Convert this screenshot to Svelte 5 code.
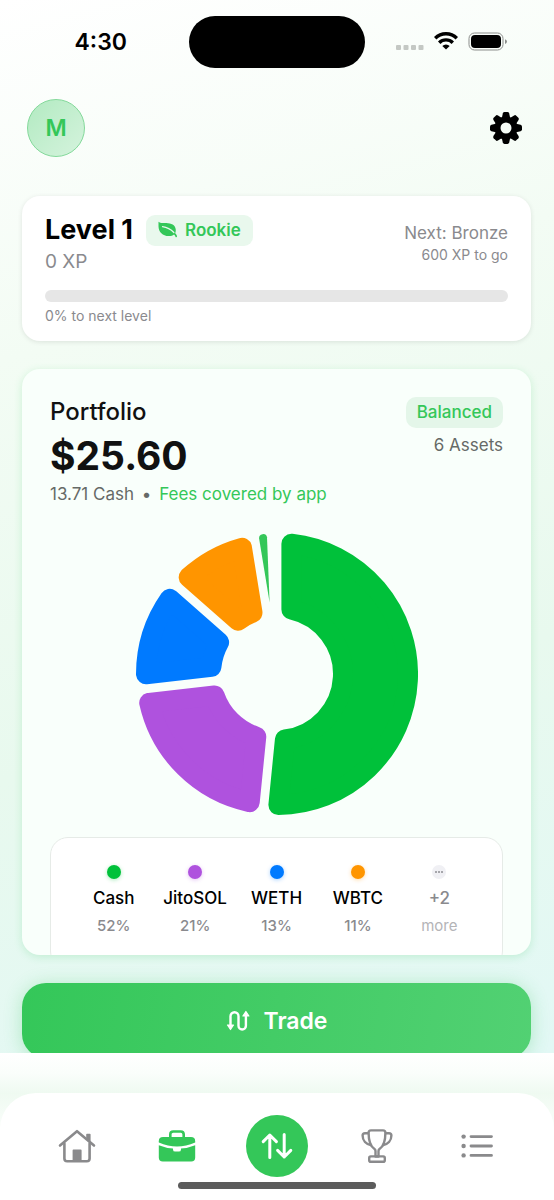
<script>
  // start and end are degrees, clockwise from twelve o'clock
  const slices = [
    { name: "Cash", share: "52%", color: "#00c13a", start: 0, end: 185.7 },
    { name: "JitoSOL", share: "21%", color: "#af52de", start: 185.7, end: 263.6 },
    { name: "WETH", share: "13%", color: "#007aff", start: 263.6, end: 311.3 },
    { name: "WBTC", share: "11%", color: "#ff9500", start: 311.3, end: 350.8 },
  ];

  const outer = 141;
  const inner = 56;
  const corner = 10;
  const inset = 4.4;

  let tab = "portfolio";

  function point(radius, angle) {
    return `${(radius * Math.sin(angle)).toFixed(2)} ${(-radius * Math.cos(angle)).toFixed(2)}`;
  }

  // the outline is pulled in by the corner radius, the round stroke fills it back
  function slicePath(s) {
    const from = (s.start * Math.PI) / 180;
    const to = (s.end * Math.PI) / 180;
    const ro = outer - corner;
    const ri = inner + corner;
    const ao = Math.asin((inset + corner) / ro);
    const ai = Math.asin((inset + corner) / ri);
    const largeOuter = to - from - 2 * ao > Math.PI ? 1 : 0;
    const largeInner = to - from - 2 * ai > Math.PI ? 1 : 0;
    return `M${point(ri, from + ai)}L${point(ro, from + ao)}A${ro} ${ro} 0 ${largeOuter} 1 ${point(ro, to - ao)}L${point(ri, to - ai)}A${ri} ${ri} 0 ${largeInner} 0 ${point(ri, from + ai)}Z`;
  }
</script>

<div class="app">
  <main class="content">
    <div class="status">
      <span class="time">4:30</span>
      <span class="island"></span>
      <svg class="signals" width="112" height="22" viewBox="0 0 112 22" aria-hidden="true">
        <g fill="#c4c8c4">
          <rect x="0" y="14" width="5" height="5" rx="1" />
          <rect x="7.5" y="14" width="5" height="5" rx="1" />
          <rect x="15" y="14" width="5" height="5" rx="1" />
          <rect x="22.5" y="14" width="5" height="5" rx="1" />
        </g>
        <g fill="none" stroke="#000" stroke-width="3.4">
          <path d="M39.2 7.2a15.2 15.2 0 0 1 21.6 0" />
          <path d="M43.2 11.7a9.6 9.6 0 0 1 13.6 0" />
        </g>
        <path d="M50 18.6l-3.7-3.7a5.3 5.3 0 0 1 7.4 0z" />
        <rect x="73" y="2" width="34" height="17" rx="5.5" fill="none" stroke="#8b8d8b" />
        <rect x="75" y="4" width="30" height="13" rx="4" />
        <path d="M109 8.2q2 .6 2 2.400t-2 2.400z" fill="#8b8d8b" />
      </svg>
    </div>

    <header class="top">
      <button class="avatar" aria-label="Profile">M</button>
      <button class="settings" aria-label="Settings">
        <svg width="34" height="34" viewBox="-17 -17 34 34">
          <g>
            {#each [0, 45, 90, 135, 180, 225, 270, 315] as a}
              <path d="M-4.4 -9L-3.2 -14.6Q-2.8 -16 -1.5 -16H1.5Q2.8 -16 3.2 -14.6L4.4 -9Z" transform="rotate({a})" />
            {/each}
          </g>
          <circle r="8.5" fill="none" stroke="#000" stroke-width="6" />
        </svg>
      </button>
    </header>

    <section class="card level">
      <div class="row">
        <div>
          <div class="title">
            <h2>Level 1</h2>
            <span class="rank">
              <svg width="20" height="18" viewBox="0 0 20 18" aria-hidden="true">
                <path d="M.5.8C2.5 2.6 6 1.9 10 2.2c5 .3 7.800 3 7.800 6.800 0 1.300-.2 2.400-.6 3.300 1 .8 1.700 2 1.800 3.200 0 .9-1.200 1.100-1.500.3-.3-.9-.8-1.600-1.500-2.200-1.400 1.200-3.300 1.600-5.400 1.500C4.8 14.900.5 11 .5 5.2z" fill="#34c759" />
                <path d="M4.5 5.6c4.300.6 8.200 2.500 11.400 5.900" fill="none" stroke="#e9f8ed" stroke-width="1.2" stroke-linecap="round" />
              </svg>
              Rookie
            </span>
          </div>
          <p class="xp">0 XP</p>
        </div>
        <div class="next">
          <p>Next: Bronze</p>
          <small>600 XP to go</small>
        </div>
      </div>
      <progress id="xp" max="600" value="0"></progress>
      <label for="xp">0% to next level</label>
    </section>

    <section class="card portfolio">
      <div class="row">
        <div>
          <h2>Portfolio</h2>
          <p class="total">$25.60</p>
        </div>
        <div class="side">
          <span class="mood">Balanced</span>
          <p>6 Assets</p>
        </div>
      </div>
      <p class="cash">13.71 Cash <span class="dot">•</span> <span class="fees">Fees covered by app</span></p>

      <svg class="pie" viewBox="-141 -141 282 282" role="img" aria-label="Portfolio allocation">
        {#each slices as s}
          <path d={slicePath(s)} fill={s.color} stroke={s.color} stroke-width={corner * 2} stroke-linejoin="round" />
        {/each}
        <path d="M-17.9 -135.5a4 4 0 0 1 7.900 -1.200L-7.4 -71.500Z" fill="#34c759" />
      </svg>

      <ul class="legend">
        {#each slices as s}
          <li>
            <i style="background: {s.color}; box-shadow: 0 1px 4px {s.color}55"></i>
            <b>{s.name}</b>
            <span>{s.share}</span>
          </li>
        {/each}
        <li class="more">
          <i>
            <svg width="10" height="4" viewBox="0 0 10 4" fill="#8e8e93" aria-hidden="true">
              <circle cx="2" cy="2" r="1" /><circle cx="5" cy="2" r="1" /><circle cx="8" cy="2" r="1" />
            </svg>
          </i>
          <b>+2</b>
          <span>more</span>
        </li>
      </ul>
    </section>

    <button class="trade">
      <svg width="24" height="22" viewBox="0 0 24 22" fill="none" stroke="#fff" stroke-width="2.4" aria-hidden="true">
        <path d="M4.5 15V6.200a4 4 0 0 1 8 0v9.600a3.700 3.700 0 0 0 7.400 0V6" />
        <path d="M1.5 15h6l-3 4.500zM16.900 6h6l-3 -4.500z" fill="#fff" stroke-width="1.2" stroke-linejoin="round" />
      </svg>
      Trade
    </button>
  </main>

  <div class="dock">
    <nav>
      <button aria-label="Home" class:active={tab === "home"} on:click={() => (tab = "home")}>
        <svg width="38" height="34" viewBox="0 0 38 34" fill="none" stroke="currentColor" stroke-width="2.6" stroke-linecap="round" stroke-linejoin="round">
          <path d="M2 16.500L19 2.200L36 16.500" />
          <path d="M6.400 14.500V29.500q0 2.800 2.800 2.800H28.800q2.800 0 2.800-2.800V14.500" />
          <path d="M29 9V5.500h2.800V12z" fill="currentColor" stroke-width="1.6" />
          <path d="M15.400 32V21.400H22.800V32z" fill="currentColor" stroke-width="1.6" />
        </svg>
      </button>
      <button aria-label="Portfolio" class:active={tab === "portfolio"} on:click={() => (tab = "portfolio")}>
        <svg width="38" height="32" viewBox="0 0 38 32" fill="currentColor">
          <path d="M12.300 8V4.500q0-3 3-3h7.400q3 0 3 3V8" fill="none" stroke="currentColor" stroke-width="2.6" />
          <path d="M.8 11.200Q.8 7 5 7H33q4.200 0 4.200 4.200V12.500Q28 16.400 19 16.400T.8 12.500z" />
          <path d="M.8 15.300Q8 18.200 15 18.600V19.400q0 2.200 2.200 2.200h3.600q2.200 0 2.200-2.200V18.600Q30 18.200 37.200 15.300V27.500Q37.200 31.500 33.200 31.500H4.800Q.8 31.500.8 27.500z" />
        </svg>
      </button>
      <button class="swap" aria-label="Swap">
        <svg width="32" height="28" viewBox="0 0 32 28" fill="none" stroke="#fff" stroke-width="3" stroke-linecap="round" stroke-linejoin="round">
          <path d="M8.800 25.500V3M2.200 9.600L8.800 3L15.400 9.600M23.200 2.500V25M16.600 18.400L23.200 25L29.800 18.400" />
        </svg>
      </button>
      <button aria-label="Rewards" class:active={tab === "rewards"} on:click={() => (tab = "rewards")}>
        <svg width="32" height="34" viewBox="0 0 32 34" fill="none" stroke="currentColor" stroke-width="2.4" stroke-linejoin="round">
          <path d="M7.600 3.800Q7.600 1.400 10 1.400H22Q24.400 1.400 24.400 3.800C24.400 12 22.500 17.500 18.500 20Q17.500 20.700 17.500 22V27.500H14.500V22Q14.500 20.700 13.500 20C9.500 17.500 7.600 12 7.600 3.800z" />
          <path d="M7.600 4.200H4Q1.600 4.200 1.600 6.600C1.600 11.500 5 15.300 10.300 16.200M24.400 4.200H28Q30.400 4.200 30.400 6.600C30.400 11.500 27 15.300 21.700 16.200" />
          <rect x="8.200" y="27.400" width="15.600" height="5.400" rx="1.6" />
        </svg>
      </button>
      <button aria-label="Activity" class:active={tab === "activity"} on:click={() => (tab = "activity")}>
        <svg width="32" height="24" viewBox="0 0 32 24" fill="currentColor" stroke="currentColor" stroke-linecap="round">
          <path d="M10 2.600H30.500M10 12H30.500M10 21.400H30.500" fill="none" stroke-width="2.8" />
          <g stroke="none">
            <circle cx="2.600" cy="2.600" r="2.2" /><circle cx="2.600" cy="12" r="2.2" /><circle cx="2.600" cy="21.400" r="2.2" />
          </g>
        </svg>
      </button>
      <span class="handle"></span>
    </nav>
  </div>
</div>

<style>
  :global(body) {
    margin: 0;
    background: #fff;
  }

  .app {
    display: flex;
    flex-direction: column;
    height: 100vh;
    font-family: Inter, "Liberation Sans", sans-serif;
    color: #000;
  }

  h2, p {
    margin: 0;
  }

  button {
    padding: 0;
    border: 0;
    background: none;
    font-family: inherit;
    cursor: pointer;
  }

  svg {
    display: block;
  }

  .content {
    flex: 1;
    min-height: 0;
    overflow-y: auto;
    scrollbar-width: none;
    padding: 16px 23px 0 22px;
    background: linear-gradient(165deg, #fff 0%, #f3fcf4 30%, #e8f9ee 65%, #e2f8f5 100%);
  }

  .status {
    display: grid;
    grid-template-columns: 1fr 176px 1fr;
    align-items: center;
    justify-items: center;
  }

  .time {
    padding-right: 9px;
    font-size: 23px;
    font-weight: 600;
  }

  .signals {
    margin-left: 9px;
  }

  .island {
    width: 176px;
    height: 52px;
    border-radius: 26px;
    background: #000;
  }

  .top {
    display: flex;
    align-items: center;
    justify-content: space-between;
    padding: 31px 8px 39px 5px;
  }

  .avatar {
    width: 58px;
    height: 58px;
    border: 1px solid #83d99a;
    border-radius: 50%;
    background: linear-gradient(135deg, #b2eac1, #d5f3dd);
    color: #34c759;
    font-size: 23px;
    font-weight: 600;
  }

  .card {
    border-radius: 18px;
  }

  .row {
    display: flex;
    justify-content: space-between;
  }

  .level {
    padding: 18px 23px 17px;
    background: #fff;
    box-shadow: 0 1px 5px rgba(0, 0, 0, 0.1);
  }

  .title {
    display: flex;
    align-items: center;
    gap: 13px;
  }

  .title h2 {
    font-size: 27px;
    font-weight: 700;
    line-height: 32px;
  }

  .rank {
    display: flex;
    align-items: center;
    gap: 7px;
    height: 31px;
    padding: 0 12px;
    border-radius: 9px;
    background: #e9f8ed;
    color: #34c759;
    font-size: 17px;
    font-weight: 600;
  }

  .xp {
    color: #8a8a8e;
    font-size: 19px;
    line-height: 31px;
  }

  .next {
    padding-top: 8px;
    color: #8a8a8e;
    font-size: 17px;
    line-height: 22px;
    text-align: right;
  }

  .next small {
    display: block;
    font-size: 14px;
  }

  progress {
    display: block;
    width: 100%;
    height: 12px;
    margin: 13px 0 5px;
    border: 0;
    border-radius: 6px;
    background: #e6e6e6;
    overflow: hidden;
    appearance: none;
  }

  progress::-webkit-progress-bar {
    background: #e6e6e6;
  }

  progress::-webkit-progress-value {
    background: #34c759;
  }

  .level label {
    display: block;
    color: #8a8a8e;
    font-size: 14px;
    line-height: 17px;
  }

  .portfolio {
    margin-top: 28px;
    padding: 28px 28px 0;
    background: #f9fffb;
    box-shadow: 0 2px 8px rgba(52, 199, 89, 0.2);
    overflow: hidden;
  }

  .portfolio h2 {
    font-size: 24px;
    font-weight: 500;
    line-height: 30px;
    color: #111;
  }

  .total {
    color: #111;
    font-size: 39px;
    font-weight: 700;
    line-height: 58px;
  }

  .side {
    color: #666a67;
    font-size: 17px;
    line-height: 31px;
    text-align: right;
  }

  .side p {
    line-height: 34px;
  }

  .mood {
    display: block;
    padding: 0 11px;
    border-radius: 10px;
    background: #e4f6e9;
    color: #34c759;
    font-size: 17px;
    font-weight: 500;
  }

  .cash {
    color: #666a67;
    font-size: 17px;
    line-height: 18px;
  }

  .dot {
    margin: 0 3px;
  }

  .fees {
    color: #34c759;
  }

  .pie {
    width: 282px;
    margin: 30px auto 22px;
  }

  .legend {
    display: flex;
    margin: 0 0 -14px;
    padding: 27px 22px 30px;
    border: 1px solid #e6ebe7;
    border-radius: 18px;
    background: #fff;
    list-style: none;
  }

  .legend li {
    flex: 1 1 0;
    display: flex;
    flex-direction: column;
    align-items: center;
    min-width: 0;
  }

  .legend i {
    display: flex;
    align-items: center;
    justify-content: center;
    width: 14px;
    height: 14px;
    border-radius: 50%;
  }

  .legend b {
    margin-top: 7px;
    font-size: 17px;
    font-weight: 500;
    line-height: 24px;
  }

  .legend span {
    margin-top: 4px;
    color: #8a8a8e;
    font-size: 15px;
    font-weight: 500;
    line-height: 24px;
  }

  .more i {
    background: #f0f0f4;
  }

  .more b {
    color: #8a8a8e;
  }

  .legend .more span {
    color: #b4b4b7;
    font-weight: 400;
  }

  .trade {
    display: flex;
    align-items: center;
    justify-content: center;
    gap: 14px;
    width: 100%;
    height: 75px;
    margin-top: 28px;
    border-radius: 24px;
    background: linear-gradient(100deg, #34c759, #52d173);
    box-shadow: 0 2px 18px rgba(52, 199, 89, 0.3);
    color: #fff;
    font-size: 23px;
    font-weight: 600;
  }

  .dock {
    padding-top: 40px;
    background: linear-gradient(#fff, #fafefb 20px, #effaf1 40px, #fff 90px);
  }

  nav {
    position: relative;
    display: flex;
    align-items: center;
    padding: 22px 27px 23px;
    border-radius: 36px 36px 0 0;
    background: #fff;
  }

  nav button {
    flex: 1;
    display: flex;
    justify-content: center;
    color: #8a8a8c;
  }

  nav .active {
    color: #34c759;
  }

  nav .swap {
    align-items: center;
    flex: none;
    width: 62px;
    height: 62px;
    margin: 0 19px;
    border-radius: 50%;
    background: #34c759;
  }

  .handle {
    position: absolute;
    left: 50%;
    bottom: 11px;
    width: 198px;
    height: 7px;
    margin-left: -99px;
    border-radius: 4px;
    background: #5c5c5c;
  }
</style>
